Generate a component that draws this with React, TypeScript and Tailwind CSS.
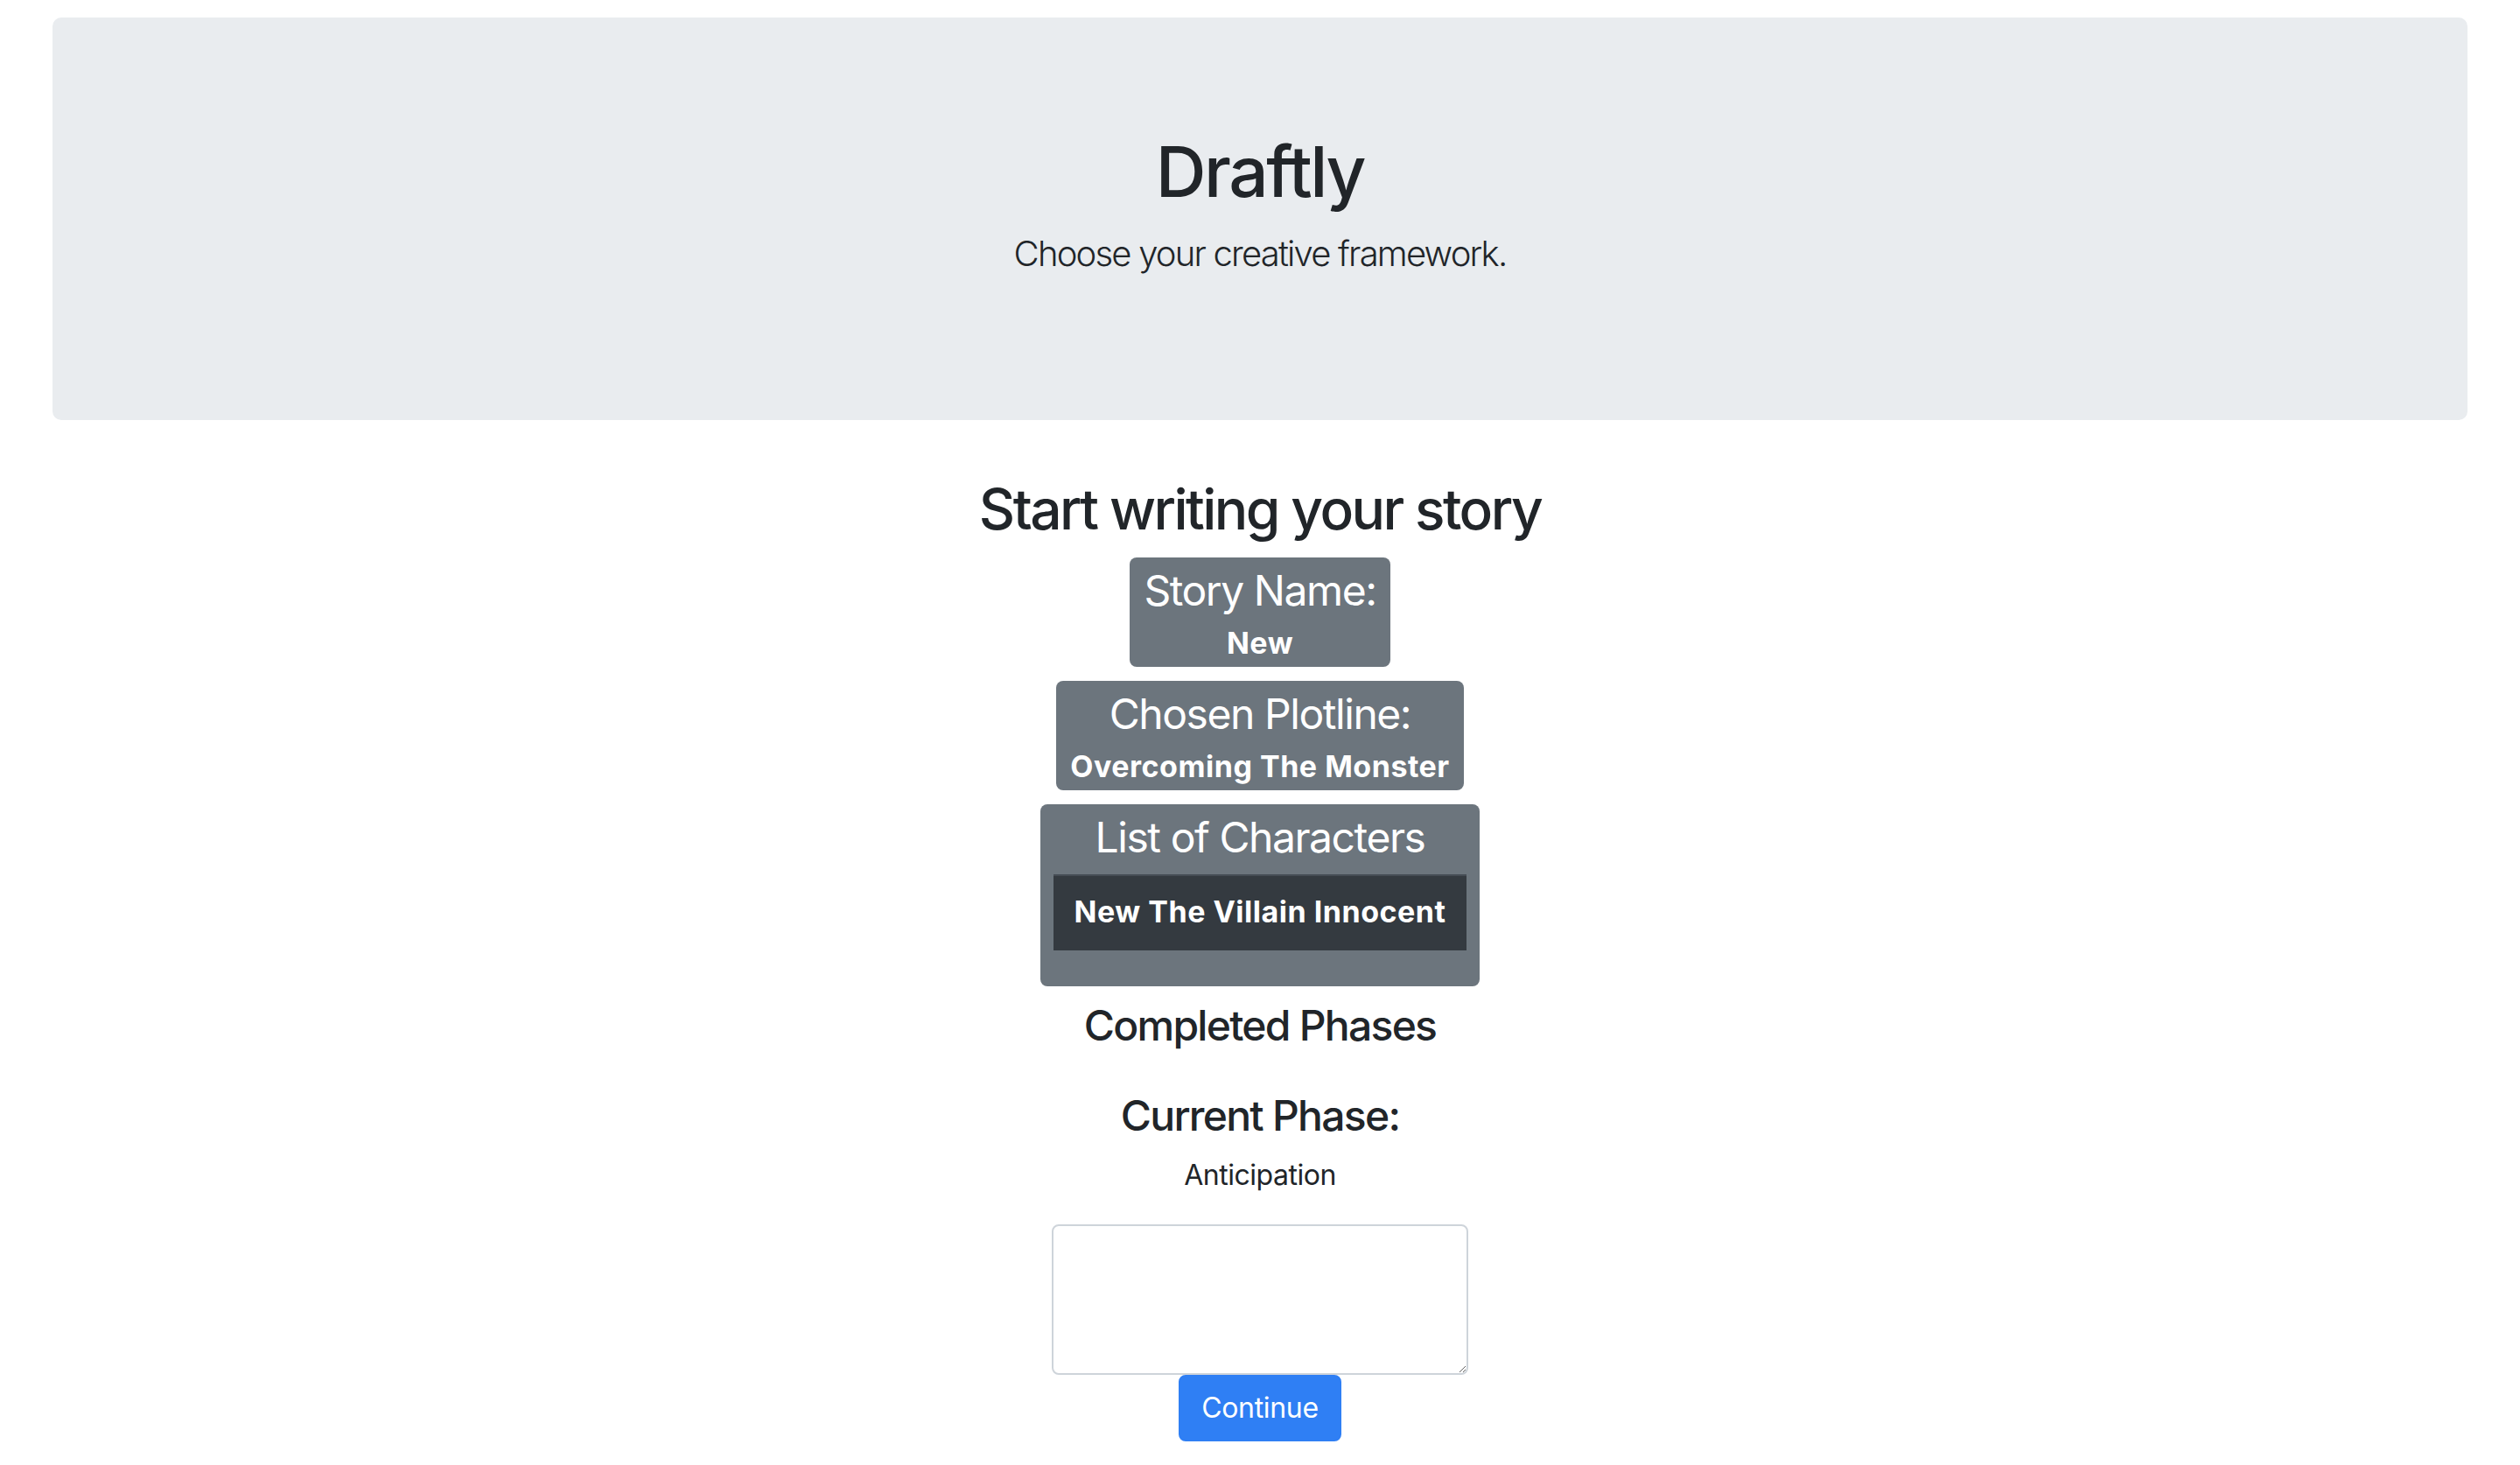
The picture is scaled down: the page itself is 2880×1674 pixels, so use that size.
export default function App() {
  const characters = ["New The Villain Innocent"];

  return (
    <div className="min-h-screen bg-white text-[#212529] font-['Inter','Noto_Sans',sans-serif] pt-[20px] px-[60px]">
      {/* header */}
      <div className="bg-[#e9ecef] rounded-[10px] py-[128px] px-[64px] mb-[64px] text-center">
        <h1 className="text-[80px] leading-[96px] font-medium tracking-[-0.03em] mb-[16px]">Draftly</h1>
        <p className="text-[40px] leading-[60px] font-light tracking-[-0.045em] mb-[32px]">Choose your creative framework.</p>
      </div>

      <div className="flex flex-col items-center text-center">
        <h2 className="text-[64px] leading-[76.8px] font-medium tracking-[-0.04em] mb-[16px]">Start writing your story</h2>

        <div className="bg-[#6c757d] text-white rounded-[8px] px-[16px] pt-[9px] pb-[7px] mb-[16px]">
          <div className="text-[48px] leading-[57.6px] tracking-[-0.03em] mb-[13px]">Story Name:</div>
          <div className="text-[34px] leading-[38.4px] font-bold tracking-[0.015em]">New</div>
        </div>

        <div className="bg-[#6c757d] text-white rounded-[8px] px-[16px] pt-[9px] pb-[7px] mb-[16px]">
          <div className="text-[48px] leading-[57.6px] tracking-[-0.03em] mb-[13px]">Chosen Plotline:</div>
          <div className="text-[34px] leading-[38.4px] font-bold tracking-[0.015em]">Overcoming The Monster</div>
        </div>

        <div className="bg-[#6c757d] text-white rounded-[8px] px-[15px] pt-[9px] pb-[7px] mb-[16px]">
          <div className="text-[48px] leading-[57.6px] tracking-[-0.03em] mb-[14px]">List of Characters</div>
          <div className="mb-[34px]">
            {characters.map((c) => (
              <div
                key={c}
                className="bg-[#343a40] border-t-2 border-[#454d55] px-[24px] pt-[22px] pb-[24px] text-[34px] leading-[38.4px] font-bold tracking-[0.015em]"
              >
                {c}
              </div>
            ))}
          </div>
        </div>

        <h4 className="text-[48px] leading-[57.6px] font-medium tracking-[-0.036em] mb-[46px]">Completed Phases</h4>

        <h4 className="text-[48px] leading-[57.6px] font-medium tracking-[-0.036em] mb-[15px]">Current Phase:</h4>
        <p className="text-[32px] leading-[48px] tracking-[-0.015em] mb-[32px]">Anticipation</p>

        <textarea className="block w-[476px] h-[172px] border-2 border-[#ced4da] rounded-[8px] bg-white" />
        <button className="bg-[#2f7ff4] text-white text-[32px] leading-[48px] tracking-[-0.01em] px-[24px] py-[12px] border-2 border-[#2f7ff4] rounded-[8px]">
          Continue
        </button>
      </div>
    </div>
  );
}
